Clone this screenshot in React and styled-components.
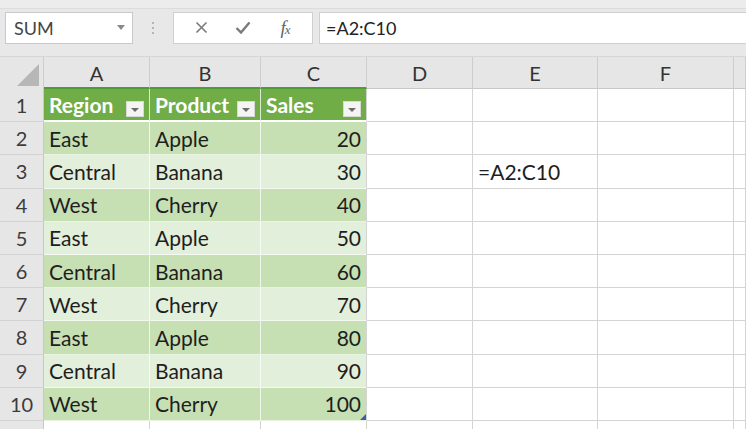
import React from "react";
import styled, { createGlobalStyle } from "styled-components";

const GlobalStyle = createGlobalStyle`
  html, body {
    margin: 0;
    padding: 0;
    background: #ffffff;
    overflow: hidden;
  }
  body {
    font-family: "Lato", "Open Sans", sans-serif;
  }
`;

const COLS = "44px 106px 111px 106px 106px 125px 136px 1fr";

const rows = [
  { region: "East", product: "Apple", sales: 20 },
  { region: "Central", product: "Banana", sales: 30 },
  { region: "West", product: "Cherry", sales: 40 },
  { region: "East", product: "Apple", sales: 50 },
  { region: "Central", product: "Banana", sales: 60 },
  { region: "West", product: "Cherry", sales: 70 },
  { region: "East", product: "Apple", sales: 80 },
  { region: "Central", product: "Banana", sales: 90 },
  { region: "West", product: "Cherry", sales: 100 },
];

const Page = styled.div`
  width: 746px;
  height: 429px;
  overflow: hidden;
  background: #e8e8e8;
`;

const TopStrip = styled.div`
  height: 8px;
  background: #ececec;
  border-bottom: 1px solid #dcdcdc;
`;

const Toolbar = styled.div`
  display: flex;
  align-items: center;
  height: 35px;
  padding: 1px 0 0 5px;
`;

const NameBox = styled.div`
  width: 128px;
  height: 32px;
  background: #fff;
  border: 1px solid #c9c9c9;
  display: flex;
  align-items: center;
  justify-content: space-between;
  padding: 0 7px 0 8px;
  box-sizing: border-box;
  color: #444;
  font-size: 18px;
`;

const Caret = styled.span`
  width: 0;
  height: 0;
  border-left: 4px solid transparent;
  border-right: 4px solid transparent;
  border-top: 5px solid #8a8a8a;
`;

const Grip = styled.div`
  width: 40px;
  display: flex;
  flex-direction: column;
  align-items: center;
  gap: 3px;

  span {
    width: 2px;
    height: 2px;
    background: #b5b5b5;
  }
`;

const ButtonBox = styled.div`
  width: 140px;
  height: 32px;
  background: #fff;
  border: 1px solid #cfcfcf;
  box-sizing: border-box;
  display: grid;
  grid-template-columns: 1fr 1fr 1fr;
  align-items: center;
  justify-items: center;
  padding: 0 6px;
  color: #777;
`;

const Fx = styled.span`
  font-family: "Liberation Serif", serif;
  font-style: italic;
  font-size: 19px;
  color: #666;
  letter-spacing: -1px;

  sub {
    font-size: 13px;
    vertical-align: baseline;
  }
`;

const FormulaBar = styled.div`
  flex: 1;
  height: 32px;
  margin-left: 6px;
  background: #fff;
  border: 1px solid #cfcfcf;
  border-right: none;
  box-sizing: border-box;
  display: flex;
  align-items: center;
  padding-left: 6px;
  font-size: 18px;
  color: #222;
`;

const Spacer = styled.div`
  height: 11px;
  border-bottom: 1px solid #d6d6d6;
`;

const Sheet = styled.div`
  background: #fff;
`;

const Row = styled.div`
  display: grid;
  grid-template-columns: ${COLS};
  height: ${(p) => p.$h}px;
`;

const Corner = styled.div`
  background: #e6e6e6;
  border-right: 1px solid #cdcdcd;
  display: flex;
  align-items: flex-end;
  justify-content: flex-end;
  padding: 0 4px 3px 0;
`;

const ColHead = styled.div`
  background: #e6e6e6;
  border-right: 1px solid #cdcdcd;
  border-bottom: ${(p) => (p.$active ? "2px solid #4f9a3a" : "1px solid #c8c8c8")};
  display: flex;
  align-items: center;
  justify-content: center;
  font-size: 20px;
  color: #333;
  padding-top: 1px;
`;

const RowHead = styled.div`
  background: #e6e6e6;
  border-right: 1px solid #c8c8c8;
  border-bottom: 1px solid #d2d2d2;
  display: flex;
  align-items: center;
  justify-content: center;
  font-size: 20px;
  color: #3c3c3c;
`;

const bg = {
  head: "#70ad47",
  dark: "#c6e0b4",
  light: "#e2efda",
  plain: "#ffffff",
};

const Cell = styled.div`
  position: relative;
  background: ${(p) => bg[p.$kind]};
  border-right: 1px solid
    ${(p) => (p.$kind === "plain" || p.$last ? "#d4d4d4" : "rgba(255,255,255,0.75)")};
  border-bottom: ${(p) =>
    p.$kind === "head"
      ? "2px solid #ffffff"
      : p.$kind === "plain"
      ? "1px solid #d4d4d4"
      : "1px solid rgba(255,255,255,0.6)"};
  display: flex;
  align-items: center;
  justify-content: ${(p) => (p.$right ? "flex-end" : "flex-start")};
  padding: 0 5px 0 5px;
  font-size: 21px;
  font-weight: ${(p) => (p.$kind === "head" ? 700 : 400)};
  color: ${(p) => (p.$kind === "head" ? "#ffffff" : "#1e1e1e")};
  white-space: nowrap;
  overflow: hidden;
  box-sizing: border-box;
`;

const HeadLabel = styled.span`
  flex: 1;
`;

const FilterButton = styled.span`
  align-self: flex-end;
  margin: 0 0 3px 2px;
  width: 18px;
  height: 16px;
  flex-shrink: 0;
  background: #f4f4f4;
  border: 1px solid #d8d8d8;
  box-sizing: border-box;
  display: flex;
  align-items: center;
  justify-content: center;

  &::after {
    content: "";
    border-left: 4px solid transparent;
    border-right: 4px solid transparent;
    border-top: 4px solid #6b6b6b;
    margin-top: 2px;
  }
`;

const Handle = styled.span`
  position: absolute;
  right: 0;
  bottom: 0;
  width: 6px;
  height: 6px;
  background: #3a5da8;
  clip-path: polygon(100% 0, 100% 100%, 0 100%);
`;

const EmptyCells = ({ n }) =>
  Array.from({ length: n }).map((_, i) => <Cell key={i} $kind="plain" />);

const App = () => {
  const RH = 33.2;
  return (
    <Page>
      <GlobalStyle />
      <TopStrip />
      <Toolbar>
        <NameBox>
          SUM
          <Caret />
        </NameBox>
        <Grip>
          <span />
          <span />
          <span />
        </Grip>
        <ButtonBox>
          <svg width="13" height="13" viewBox="0 0 13 13">
            <path d="M1.5 1.5l10 10M11.5 1.5l-10 10" stroke="#7a7a7a" strokeWidth="1.6" />
          </svg>
          <svg width="16" height="13" viewBox="0 0 16 13">
            <path d="M1.5 7l4.5 4.5L14.5 1.5" stroke="#7a7a7a" strokeWidth="2.4" fill="none" />
          </svg>
          <Fx>
            f<sub>x</sub>
          </Fx>
        </ButtonBox>
        <FormulaBar>=A2:C10</FormulaBar>
      </Toolbar>
      <Spacer />
      <Sheet>
        <Row $h={32}>
          <Corner>
            <svg width="22" height="22" viewBox="0 0 22 22">
              <path d="M22 0V22H0Z" fill="#b7b7b7" />
            </svg>
          </Corner>
          {["A", "B", "C", "D", "E", "F", ""].map((c, i) => (
            <ColHead key={i} $active={i < 3}>
              {c}
            </ColHead>
          ))}
        </Row>
        <Row $h={RH}>
          <RowHead>1</RowHead>
          {["Region", "Product", "Sales"].map((h, i) => (
            <Cell key={h} $kind="head" $last={i === 2}>
              <HeadLabel>{h}</HeadLabel>
              <FilterButton />
            </Cell>
          ))}
          <EmptyCells n={4} />
        </Row>
        {rows.map((r, i) => {
          const kind = i % 2 === 0 ? "dark" : "light";
          const n = i + 2;
          return (
            <Row key={n} $h={RH}>
              <RowHead>{n}</RowHead>
              <Cell $kind={kind}>{r.region}</Cell>
              <Cell $kind={kind}>{r.product}</Cell>
              <Cell $kind={kind} $right $last>
                {r.sales}
                {n === 10 && <Handle />}
              </Cell>
              <Cell $kind="plain" />
              <Cell $kind="plain">{n === 3 ? "=A2:C10" : ""}</Cell>
              <Cell $kind="plain" />
              <Cell $kind="plain" />
            </Row>
          );
        })}
        <Row $h={RH}>
          <RowHead>11</RowHead>
          <EmptyCells n={7} />
        </Row>
      </Sheet>
    </Page>
  );
};

export default App;
